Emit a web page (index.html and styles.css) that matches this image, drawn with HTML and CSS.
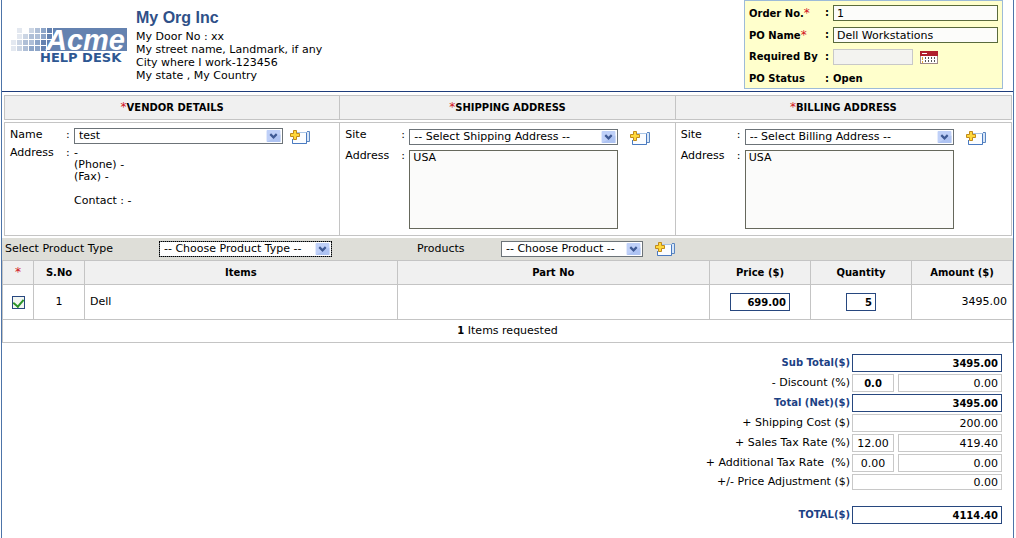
FILE: index.html
```
<!DOCTYPE html>
<html lang="en">

<head>
    <meta charset="utf-8">
    <title>Purchase Order</title>
    <link rel="stylesheet" href="styles.css">
</head>

<body>

<!-- shared icons -->
<svg class="defs" aria-hidden="true">
    <symbol id="arrow" viewBox="0 0 15 13">
        <rect width="15" height="13" rx="1" fill="#bfd0f8"/>
        <path d="M0 13h15V5z" fill="#aec3f2"/>
        <path d="M4 4.5l3.5 3.5L11 4.5" fill="none" stroke="#3f5a94" stroke-width="2.4"/>
    </symbol>
    <symbol id="add" viewBox="0 0 20 14">
        <path d="M17 1.5h2.5v10H17" fill="#d7e6f8" stroke="#5b86c0"/>
        <path d="M4.5 2.5h12v11h-14V9" fill="#fbfdff" stroke="#a9c5e6"/>
        <path d="M16.5 2.5v11h-14V9" fill="none" stroke="#4a7ac0"/>
        <path d="M3.5 .5h3v3h3v3h-3v3h-3v-3h-3v-3h3z" fill="#ffd83c" stroke="#c08a1c"/>
    </symbol>
</svg>

<form class="page">
    <div class="header">
        <svg class="logo" width="118" height="38" viewBox="0 0 118 38" role="img" aria-label="Acme Help Desk">
            <g fill="#e3e8f0">
                <rect x="6" y="0" width="5" height="5"/>
                <rect x="6" y="6" width="5" height="5"/>
                <rect x="0" y="12" width="5" height="5"/>
                <rect x="0" y="18" width="5" height="5"/>
            </g>
            <g fill="#cbd5e4">
                <rect x="12" y="6" width="5" height="5"/>
                <rect x="6" y="12" width="5" height="5"/>
                <rect x="6" y="18" width="5" height="5"/>
                <rect x="18" y="0" width="5" height="5"/>
            </g>
            <g fill="#afbfd7">
                <rect x="18" y="6" width="5" height="5"/>
                <rect x="12" y="12" width="5" height="5"/>
                <rect x="12" y="18" width="5" height="5"/>
                <rect x="24" y="0" width="5" height="5"/>
                <rect x="24" y="6" width="5" height="5"/>
                <rect x="18" y="12" width="5" height="5"/>
            </g>
            <g fill="#8da5c8">
                <rect x="18" y="18" width="5" height="5"/>
                <rect x="24" y="12" width="5" height="5"/>
                <rect x="24" y="18" width="5" height="5"/>
                <rect x="30" y="0" width="5" height="5"/>
                <rect x="30" y="6" width="5" height="5"/>
            </g>
            <g fill="#6482b0">
                <rect x="30" y="12" width="5" height="5"/>
                <rect x="30" y="18" width="5" height="5"/>
                <rect x="36" y="0" width="5" height="5"/>
                <rect x="36" y="6" width="5" height="5"/>
                <rect x="36" y="12" width="80" height="11"/>
                <rect x="42" y="0" width="74" height="23"/>
            </g>
            <text class="logo-name" x="35" y="22">Acme</text>
            <text class="logo-sub" x="29" y="34">HELP DESK</text>
        </svg>
        <div class="org">
            <h1>My Org Inc</h1>
            <div>My Door No : xx</div>
            <div>My street name, Landmark, if any</div>
            <div>City where I work-123456</div>
            <div>My state , My Country</div>
        </div>
        <div class="order-box">
            <label for="orderNo">Order No.<span class="req">*</span></label>
            <span>:</span>
            <input id="orderNo" type="text" value="1">
            <label for="poName">PO Name<span class="req">*</span></label>
            <span>:</span>
            <input id="poName" type="text" value="Dell Workstations">
            <label for="requiredBy">Required By</label>
            <span>:</span>
            <div class="date">
                <input id="requiredBy" type="text" disabled>
                <button type="button" class="icon-btn" aria-label="Pick a date">
                    <svg width="18" height="13" viewBox="0 0 18 13">
                        <rect x=".5" y=".5" width="17" height="12" fill="#fff" stroke="#a08a8a"/>
                        <rect width="18" height="5" fill="#b0202c"/>
                        <path d="M2 2.5h5" stroke="#fff"/>
                        <path d="M2.5 6v6" stroke="#e0a030" stroke-dasharray="3 1"/>
                        <path d="M5.5 6v6M8.5 6v6M11.5 6v6M14.5 6v6" stroke="#555" stroke-dasharray="2 1"/>
                    </svg>
                </button>
            </div>
            <span>PO Status</span>
            <span>:</span>
            <span>Open</span>
        </div>
    </div>

    <div class="panels titles">
        <h2><span class="req">*</span>VENDOR DETAILS</h2>
        <h2><span class="req">*</span>SHIPPING ADDRESS</h2>
        <h2><span class="req">*</span>BILLING ADDRESS</h2>
    </div>

    <div class="panels details">
        <div class="panel vendor">
            <div class="field">
                <label for="vendor">Name</label><span class="colon">:</span>
                <span class="pick">
                    <select id="vendor"><option>test</option></select>
                    <svg class="arrow"><use href="#arrow"/></svg>
                </span>
                <button type="button" class="icon-btn" aria-label="Add vendor"><svg width="20" height="14"><use href="#add"/></svg></button>
            </div>
            <div class="field">
                <span>Address</span><span class="colon">:</span>
                <div class="vendor-address">-<br>(Phone) -<br>(Fax) -<br><br>Contact : -</div>
            </div>
        </div>
        <div class="panel">
            <div class="field">
                <label for="shipSite">Site</label><span class="colon">:</span>
                <span class="pick">
                    <select id="shipSite"><option>-- Select Shipping Address --</option></select>
                    <svg class="arrow"><use href="#arrow"/></svg>
                </span>
                <button type="button" class="icon-btn" aria-label="Add shipping address"><svg width="20" height="14"><use href="#add"/></svg></button>
            </div>
            <div class="field">
                <label for="shipAddress">Address</label><span class="colon">:</span>
                <textarea id="shipAddress">USA</textarea>
            </div>
        </div>
        <div class="panel">
            <div class="field">
                <label for="billSite">Site</label><span class="colon">:</span>
                <span class="pick">
                    <select id="billSite"><option>-- Select Billing Address --</option></select>
                    <svg class="arrow"><use href="#arrow"/></svg>
                </span>
                <button type="button" class="icon-btn" aria-label="Add billing address"><svg width="20" height="14"><use href="#add"/></svg></button>
            </div>
            <div class="field">
                <label for="billAddress">Address</label><span class="colon">:</span>
                <textarea id="billAddress">USA</textarea>
            </div>
        </div>
    </div>

    <div class="product-bar">
        <label class="type-label" for="productType">Select Product Type</label>
        <span class="pick type-pick">
            <select id="productType"><option>-- Choose Product Type --</option></select>
            <svg class="arrow"><use href="#arrow"/></svg>
        </span>
        <label class="product-label" for="product">Products</label>
        <span class="pick product-pick">
            <select id="product"><option>-- Choose Product --</option></select>
            <svg class="arrow"><use href="#arrow"/></svg>
        </span>
        <button type="button" class="icon-btn" aria-label="Add product"><svg width="20" height="14"><use href="#add"/></svg></button>
    </div>

    <table class="items">
        <colgroup>
            <col class="c-check"><col class="c-no"><col><col><col class="c-num"><col class="c-num"><col class="c-num">
        </colgroup>
        <thead>
            <tr>
                <th><span class="req">*</span></th>
                <th>S.No</th>
                <th>Items</th>
                <th>Part No</th>
                <th>Price ($)</th>
                <th>Quantity</th>
                <th>Amount ($)</th>
            </tr>
        </thead>
        <tbody>
            <tr>
                <td><input type="checkbox" aria-label="Select item 1" checked></td>
                <td>1</td>
                <td class="left">Dell</td>
                <td></td>
                <td><input class="price" type="text" aria-label="Price" value="699.00"></td>
                <td><input class="qty" type="text" aria-label="Quantity" value="5"></td>
                <td class="right">3495.00</td>
            </tr>
        </tbody>
        <tfoot>
            <tr>
                <td colspan="7"><b>1</b> Items requested</td>
            </tr>
        </tfoot>
    </table>

    <div class="totals">
        <div class="line strong">
            <label for="subTotal">Sub Total($)</label>
            <input id="subTotal" type="text" value="3495.00">
        </div>
        <div class="line">
            <label for="discount">- Discount (%)</label>
            <input id="discount" class="pct bold" type="text" value="0.0">
            <input class="amt" type="text" aria-label="Discount amount" value="0.00">
        </div>
        <div class="line strong">
            <label for="net">Total (Net)($)</label>
            <input id="net" type="text" value="3495.00">
        </div>
        <div class="line">
            <label for="shipping">+ Shipping Cost ($)</label>
            <input id="shipping" type="text" value="200.00">
        </div>
        <div class="line">
            <label for="salesTax">+ Sales Tax Rate (%)</label>
            <input id="salesTax" class="pct" type="text" value="12.00">
            <input class="amt" type="text" aria-label="Sales tax amount" value="419.40">
        </div>
        <div class="line">
            <label for="addTax">+ Additional Tax Rate &nbsp;(%)</label>
            <input id="addTax" class="pct" type="text" value="0.00">
            <input class="amt" type="text" aria-label="Additional tax amount" value="0.00">
        </div>
        <div class="line">
            <label for="adjust">+/- Price Adjustment ($)</label>
            <input id="adjust" class="short" type="text" value="0.00">
        </div>
        <div class="line strong grand">
            <label for="total">TOTAL($)</label>
            <input id="total" type="text" value="4114.40">
        </div>
    </div>
</form>

</body>
</html>
```
FILE: styles.css
```
* {
    box-sizing: border-box;
}

body {
    margin: 0;
    background: #fff;
    color: #000;
    font: 11px/12px Verdana, "DejaVu Sans", sans-serif;
}

input, select, textarea, button {
    margin: 0;
    font: inherit;
    color: inherit;
    border-radius: 0;
}

.defs {
    display: none;
}

.page {
    min-height: 100vh;
    margin: 0 2px 0 1px;
    border-left: 1px solid #4d74a8;
    border-right: 1px solid #4d74a8;
}

.req {
    color: #d01020;
    font-size: 12px;
    font-weight: normal;
}

/* header */
.header {
    display: flex;
    align-items: flex-start;
    height: 92px;
    padding: 0 10px 0 9px;
    border-bottom: 1px solid #1f3d7c;
}

.logo {
    margin-top: 28px;
    overflow: visible;
}

.logo-name {
    font: italic bold 29px "Liberation Sans", Arial, sans-serif;
    fill: #fff;
}

.logo-sub {
    font: bold 13px "DejaVu Sans", Verdana, sans-serif;
    fill: #2d5792;
}

.org {
    flex: 1;
    margin: 9px 0 0 7px;
    line-height: 13px;
}

.org h1 {
    margin: 0 0 3px;
    color: #2f5088;
    font: bold 16px/18px "Liberation Sans", Arial, sans-serif;
}

.order-box {
    display: grid;
    grid-template-columns: 76px 8px 165px;
    grid-auto-rows: 22px;
    align-items: center;
    width: 259px;
    height: 89px;
    padding: 1px 4px;
    border: 1px solid #9dbbd8;
    background: #ffffcc;
    font-size: 10px;
    font-weight: bold;
}

.order-box input {
    width: 165px;
    height: 16px;
    padding: 0 3px;
    border: 1px solid #5a6a3c;
    background: #fcfcfa;
    font-size: 11px;
    font-weight: normal;
}

.order-box .date {
    display: flex;
    align-items: center;
    gap: 7px;
}

.order-box .date input {
    width: 80px;
    border-color: #c8c8c8;
    background: #f3f3f0;
}

.icon-btn {
    display: block;
    padding: 0;
    border: 0;
    background: none;
    cursor: pointer;
}

.icon-btn svg {
    display: block;
}

/* vendor / shipping / billing */
.panels {
    display: grid;
    grid-template-columns: repeat(3, 1fr);
    margin: 3px 1px 0 2px;
    border: 1px solid #c4c4c4;
}

.panels > * {
    border-right: 1px solid #c4c4c4;
}

.panels > :last-child {
    border-right: 0;
}

.titles {
    background: #f0f0f0;
}

.titles h2 {
    margin: 0;
    font-size: 10px;
    line-height: 23px;
    text-align: center;
}

.details {
    margin-top: 2px;
}

.panel {
    padding: 6px 5px;
}

.vendor {
    padding-top: 5px;
}

.field {
    display: grid;
    grid-template-columns: 56px 8px 209px 20px;
    margin-bottom: 5px;
}

.panel .field:last-child {
    margin-bottom: 0;
}

.field .icon-btn {
    margin: 2px 0 0 12px;
}

.vendor .icon-btn {
    margin-left: 7px;
}

.vendor .field > label, .vendor .field > .colon, .vendor .field:last-child > * {
    padding-top: 1px;
}

.vendor .field {
    margin-bottom: 2px;
}

.pick {
    position: relative;
    display: block;
}

.pick select {
    display: block;
    width: 100%;
    height: 16px;
    padding: 0 18px 0 4px;
    border: 1px solid #6c7378;
    background: #fff;
    appearance: none;
}

.pick .arrow {
    position: absolute;
    top: 2px;
    right: 2px;
    width: 15px;
    height: 12px;
    pointer-events: none;
}

textarea {
    display: block;
    height: 79px;
    padding: 1px 3px;
    border: 1px solid #66685c;
    background: #fbfbfa;
    resize: none;
}

/* product bar */
.product-bar {
    display: flex;
    align-items: center;
    height: 22px;
    margin-top: 2px;
    padding-left: 3px;
    background: #deded8;
}

.type-label {
    width: 154px;
}

.type-pick {
    width: 173px;
}

.type-pick select {
    outline: 1px dotted #000;
    outline-offset: -1px;
}

.product-label {
    width: 84px;
    margin-left: 85px;
}

.product-pick {
    width: 142px;
}

.product-bar .icon-btn {
    margin-left: 12px;
}

/* items */
.items {
    width: 100%;
    border-collapse: collapse;
    table-layout: fixed;
    text-align: center;
}

.c-check {
    width: 31px;
}

.c-no {
    width: 51px;
}

.c-num {
    width: 101px;
}

.items th, .items td {
    height: 35px;
    padding: 0 5px;
    border: 1px solid #c4c4c4;
}

.items th {
    height: 24px;
    background: #f0f0f0;
    font-size: 10px;
}

.items tfoot td {
    height: 23px;
}

.items b {
    font-size: 10px;
}

.items .left {
    text-align: left;
}

.items .right {
    text-align: right;
}

.items input {
    height: 18px;
    padding: 0 3px;
    border: 1px solid #27477f;
    background: #fff;
    font-size: 10px;
    font-weight: bold;
    text-align: right;
}

.items .price {
    width: 60px;
}

.items .qty {
    width: 30px;
}

.items input[type="checkbox"] {
    display: grid;
    place-items: center;
    width: 13px;
    height: 13px;
    margin: 0 auto;
    padding: 0 0 2px;
    background: #f2f6f2;
    appearance: none;
}

.items input[type="checkbox"]:checked::before {
    content: "";
    width: 5px;
    height: 8px;
    border: solid #2a9428;
    border-width: 0 2px 2px 0;
    transform: rotate(40deg);
}

/* totals */
.totals {
    display: flex;
    flex-direction: column;
    gap: 2px;
    padding: 11px 11px 14px 0;
}

.line {
    display: flex;
    justify-content: flex-end;
    align-items: center;
}

.line label {
    margin-right: 2px;
}

.line input {
    width: 150px;
    height: 18px;
    padding: 0 3px;
    border: 1px solid #c8c8c8;
    background: #fff;
    text-align: right;
}

.line .pct {
    width: 42px;
    text-align: center;
}

.line .amt {
    width: 104px;
    margin-left: 4px;
}

.line .short {
    height: 16px;
}

.line .bold, .strong {
    font-size: 10px;
    font-weight: bold;
}

.strong label {
    color: #1c4184;
}

.strong input {
    border-color: #27477f;
}

.grand {
    margin-top: 14px;
}
```
